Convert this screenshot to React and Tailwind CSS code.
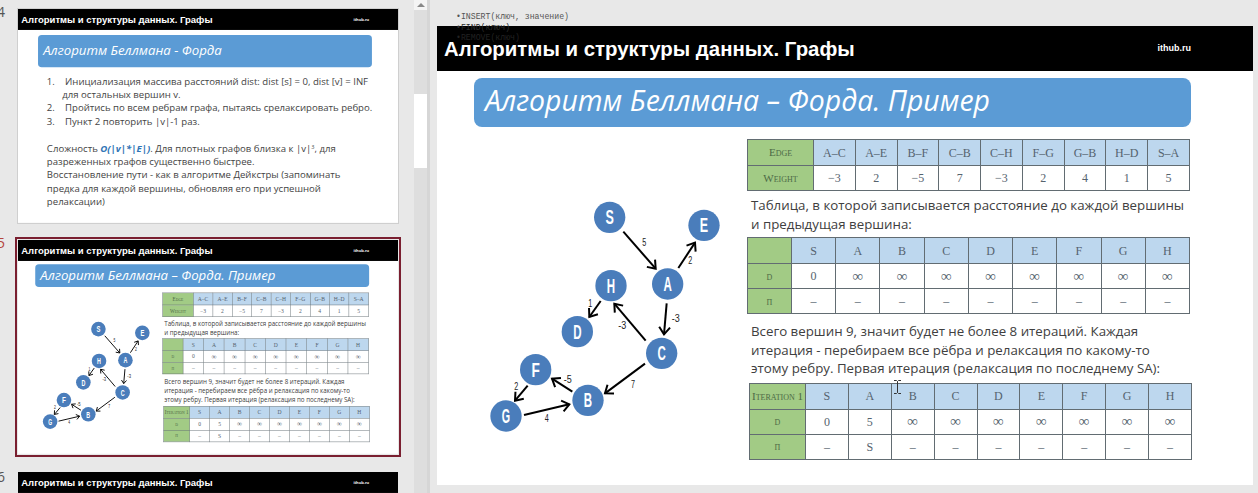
/**
 * Slide editor view: thumbnail strip on the left, current slide on the right.
 * Thumbnails reuse the full size slides, scaled down.
 */
const SANS = "font-['Open_Sans','Noto_Sans',sans-serif]";
const SERIF = "font-['Liberation_Serif',serif]";
const NOTE = "font-['Open_Sans','Noto_Sans',sans-serif] pl-[4px] text-[#404040] text-[13.3px] leading-[18.5px] whitespace-nowrap";

const NODES = [
  ["S", 419, 82], ["E", 702, 106], ["A", 593, 282], ["H", 423, 287], ["D", 322, 425],
  ["C", 575, 490], ["F", 197, 539], ["B", 354, 631], ["G", 108, 678],
];

const EDGES = [
  [460, 125, 557, 236], [625, 234, 675, 158], [590, 340, 582, 433],
  [527, 452, 433, 341], [392, 333, 358, 381], [525, 521, 405, 610],
  [307, 605, 246, 566], [173, 587, 135, 632], [162, 675, 298, 643],
];

const WEIGHTS = [
  ["5", 523, 168], ["2", 661, 223], ["-3", 617, 395], ["-3", 457, 418], ["1", 361, 352],
  ["7", 489, 593], ["-5", 293, 578], ["2", 139, 600], ["4", 230, 696],
];

const VERTICES = ["S", "A", "B", "C", "D", "E", "F", "G", "H"];
const INF = "∞";

function arrowHead(x1, y1, x2, y2) {
  const angle = Math.atan2(y2 - y1, x2 - x1);
  const point = (a) => `${x2 - 27 * Math.cos(angle + a)},${y2 - 27 * Math.sin(angle + a)}`;
  return `${point(0.65)} ${x2},${y2} ${point(-0.65)}`;
}

function Graph() {
  return (
    <svg viewBox="0 0 831 870" className="w-[277px] h-[290px] shrink-0">
      {EDGES.map(([x1, y1, x2, y2], i) => (
        <g key={i} stroke="#000" strokeWidth="6" fill="none">
          <line x1={x1} y1={y1} x2={x2} y2={y2} />
          <polyline points={arrowHead(x1, y1, x2, y2)} />
        </g>
      ))}
      {NODES.map(([name, x, y]) => (
        <g key={name}>
          <circle cx={x} cy={y} r="47" fill="#4a7dbb" />
          <text x={x} y={y + 21} textAnchor="middle" fill="#fff" fontSize="58" fontWeight="700"
            fontFamily="Liberation Sans" textLength="25" lengthAdjust="spacingAndGlyphs">{name}</text>
        </g>
      ))}
      {WEIGHTS.map(([value, x, y], i) => (
        <text key={i} x={x} y={y} textAnchor="middle" fill="#222" fontSize="30" fontFamily="Liberation Sans"
          textLength={value.length * 12} lengthAdjust="spacingAndGlyphs">{value}</text>
      ))}
    </svg>
  );
}

function Cell({ children, kind, tall, size }) {
  const fill = kind === "head" ? "bg-[#bdd7ee]" : kind === "label" ? "bg-[#a2cb85]" : "bg-white";
  const caps = kind === "label" ? "[font-variant:small-caps] text-[#4d6a45]" : "text-[#55636e]";
  return (
    <td className={`border border-[#626c72] p-0 text-center leading-none whitespace-nowrap ${fill} ${caps} ${tall ? "h-[26px]" : "h-[25px]"} ${size}`}>
      {children}
    </td>
  );
}

function DataTable({ labelWidth, rows, indent }) {
  return (
    <table className={`${SERIF} table-fixed border-collapse w-[443px] ${indent}`}>
      <colgroup>
        <col className={labelWidth} />
      </colgroup>
      <tbody>
        {rows.map((row, r) => (
          <tr key={r}>
            {row.map((value, c) => (
              <Cell key={c} kind={c === 0 ? "label" : r === 0 ? "head" : "body"} tall={r === 0}
                size={c === 0 ? "text-[11px]" : value === INF ? "text-[15px]" : "text-[12px]"}>
                {value}
              </Cell>
            ))}
          </tr>
        ))}
      </tbody>
    </table>
  );
}

function SlideHeader() {
  return (
    <div className="h-[45px] bg-black flex items-center pl-[7px] pr-[62px] text-white font-['Liberation_Sans',sans-serif] font-bold">
      <span className="text-[20.4px] leading-none pt-[1px]">Алгоритмы и структуры данных. Графы</span>
      <span className="ml-auto text-[9px] leading-none">ithub.ru</span>
    </div>
  );
}

function Banner({ children, indent, height }) {
  return (
    <div className={`${SANS} ${indent} ${height} w-[717px] rounded-[8px] bg-[#5b9bd5] flex items-center pl-[11px] pb-[4px] text-white italic text-[28.4px] leading-none whitespace-nowrap`}>
      {children}
    </div>
  );
}

function AlgorithmSlide() {
  const lines = [
    ["1.", "Инициализация массива расстояний dist: dist [s] = 0, dist [v] = INF для остальных вершин v."],
    ["2.", "Пройтись по всем ребрам графа, пытаясь срелаксировать ребро."],
    ["3.", "Пункт 2 повторить |v|-1 раз."],
  ];
  return (
    <div className="w-[816px] h-[459px] bg-white">
      <SlideHeader />
      <div className="pt-[11px]">
        <Banner indent="ml-[43px]" height="h-[69px]">Алгоритм Беллмана - Форда</Banner>
      </div>
      <div className={`${SANS} ml-[62px] w-[700px] pt-[16px] text-[#444] text-[20.6px] leading-[28.6px]`}>
        {lines.map(([number, text]) => (
          <p key={number} className="pl-[33px] -indent-[33px]">
            <span className="inline-block indent-0 w-[39px]">{number}</span>
            {text}
          </p>
        ))}
        <p className="mt-[28.6px]">
          Сложность <b className="italic text-[#2e74b5]">O(|v|*|E|)</b>. Для плотных графов близка к |v|
          <sup className="text-[12px]">3</sup>, для разреженных графов существенно быстрее.
        </p>
        <p>Восстановление пути - как в алгоритме Дейкстры (запоминать предка для каждой вершины, обновляя его при успешной релаксации)</p>
      </div>
    </div>
  );
}

function ExampleSlide({ withCursor }) {
  return (
    <div className="w-[816px] h-[459px] bg-white overflow-hidden">
      <SlideHeader />
      <div className="pt-[7px]">
        <Banner indent="ml-[37px]" height="h-[49px]">Алгоритм Беллмана – Форда. Пример</Banner>
      </div>
      <div className="flex pt-[12px]">
        <div className="ml-[33px] mt-[51px]">
          <Graph />
        </div>
        <div className="relative">
          <DataTable
            labelWidth="w-[66px]"
            rows={[
              ["Edge", "A–C", "A–E", "B–F", "C–B", "C–H", "F–G", "G–B", "H–D", "S–A"],
              ["Weight", "−3", "2", "−5", "7", "−3", "2", "4", "1", "5"],
            ]}
          />
          <p className={`${NOTE} pt-[5px] pb-[4px]`}>
            Таблица, в которой записывается расстояние до каждой вершины
            <br />и предыдущая вершина:
          </p>
          <DataTable
            labelWidth="w-[44px]"
            rows={[
              ["", ...VERTICES],
              ["d", "0", ...Array(8).fill(INF)],
              ["п", ...Array(9).fill("–")],
            ]}
          />
          <p className={`${NOTE} pt-[8px] pb-[5px]`}>
            Всего вершин 9, значит будет не более 8 итераций. Каждая
            <br />итерация - перебираем все рёбра и релаксация по какому-то
            <br />этому ребру. Первая итерация (релаксация по последнему SA):
          </p>
          <DataTable
            labelWidth="w-[56px]"
            indent="ml-[2px]"
            rows={[
              ["Iteration 1", ...VERTICES],
              ["d", "0", "5", ...Array(7).fill(INF)],
              ["п", "–", "S", ...Array(7).fill("–")],
            ]}
          />
          {withCursor && (
            <svg viewBox="0 0 9 14" className="absolute left-[146px] top-[241px] w-[9px] h-[14px]" stroke="#333" fill="none">
              <path d="M1 .5h2.5l1 1 1-1H8M4.5 1.5v11M1 13.5h2.5l1-1 1 1H8" />
            </svg>
          )}
        </div>
      </div>
    </div>
  );
}

function Thumbnail({ children, className = "" }) {
  return (
    <div className={`w-[380px] h-[214px] overflow-hidden ${className}`}>
      <div className="w-[816px] h-[459px] origin-top-left scale-[0.4657]">{children}</div>
    </div>
  );
}

function SlideNumber({ children, className = "" }) {
  return (
    <div className={`${SANS} w-[5px] flex justify-end text-[14px] leading-none ${className}`}>
      <span>{children}</span>
    </div>
  );
}

function SlideStrip() {
  return (
    <div className="w-[414px] shrink-0 pt-[9px] overflow-hidden">
      <div className="flex">
        <SlideNumber className="text-[#555] -mt-[4px]">4</SlideNumber>
        <Thumbnail className="ml-[13px] shadow-[0_0_0_1px_#cfcfcf]">
          <AlgorithmSlide />
        </Thumbnail>
      </div>
      <div className="flex mt-[14px]">
        <SlideNumber className="text-[#b5453c] -mt-[1px]">5</SlideNumber>
        <div className="ml-[10px] border-2 border-[#7a1f30] p-px">
          <Thumbnail>
            <ExampleSlide />
          </Thumbnail>
        </div>
      </div>
      <div className="flex mt-[15px]">
        <SlideNumber className="text-[#555] -mt-[2px]">6</SlideNumber>
        <Thumbnail className="ml-[13px]">
          <SlideHeader />
        </Thumbnail>
      </div>
    </div>
  );
}

function ScrollBar() {
  return (
    <div className="w-[13px] shrink-0 h-full bg-[#dedede] flex flex-col">
      <div className="h-[10px] bg-[#f4f4f4] flex items-center justify-center">
        <div className="w-0 h-0 border-x-[4px] border-x-transparent border-b-[4px] border-b-[#888]" />
      </div>
      <div className="mt-[84px] h-[74px] bg-white" />
    </div>
  );
}

export default function App() {
  return (
    <div className="relative w-[1258px] h-[493px] overflow-hidden flex bg-[#e8e8e8]">
      <SlideStrip />
      <ScrollBar />
      <div className="w-[3px] shrink-0 h-full bg-[#d6d6d6]" />
      <div className="pl-[7px] pt-[26px]">
        <ExampleSlide withCursor />
      </div>
      <div className="absolute left-[456px] top-[12px] font-['Liberation_Mono',monospace] text-[8.2px] leading-[10.5px] whitespace-nowrap">
        <p className="text-[#555]">•INSERT(ключ, значение)</p>
        <p className="text-[#2b2b2b]">•FIND(ключ)</p>
        <p className="text-[#222]">•REMOVE(ключ)</p>
      </div>
    </div>
  );
}
